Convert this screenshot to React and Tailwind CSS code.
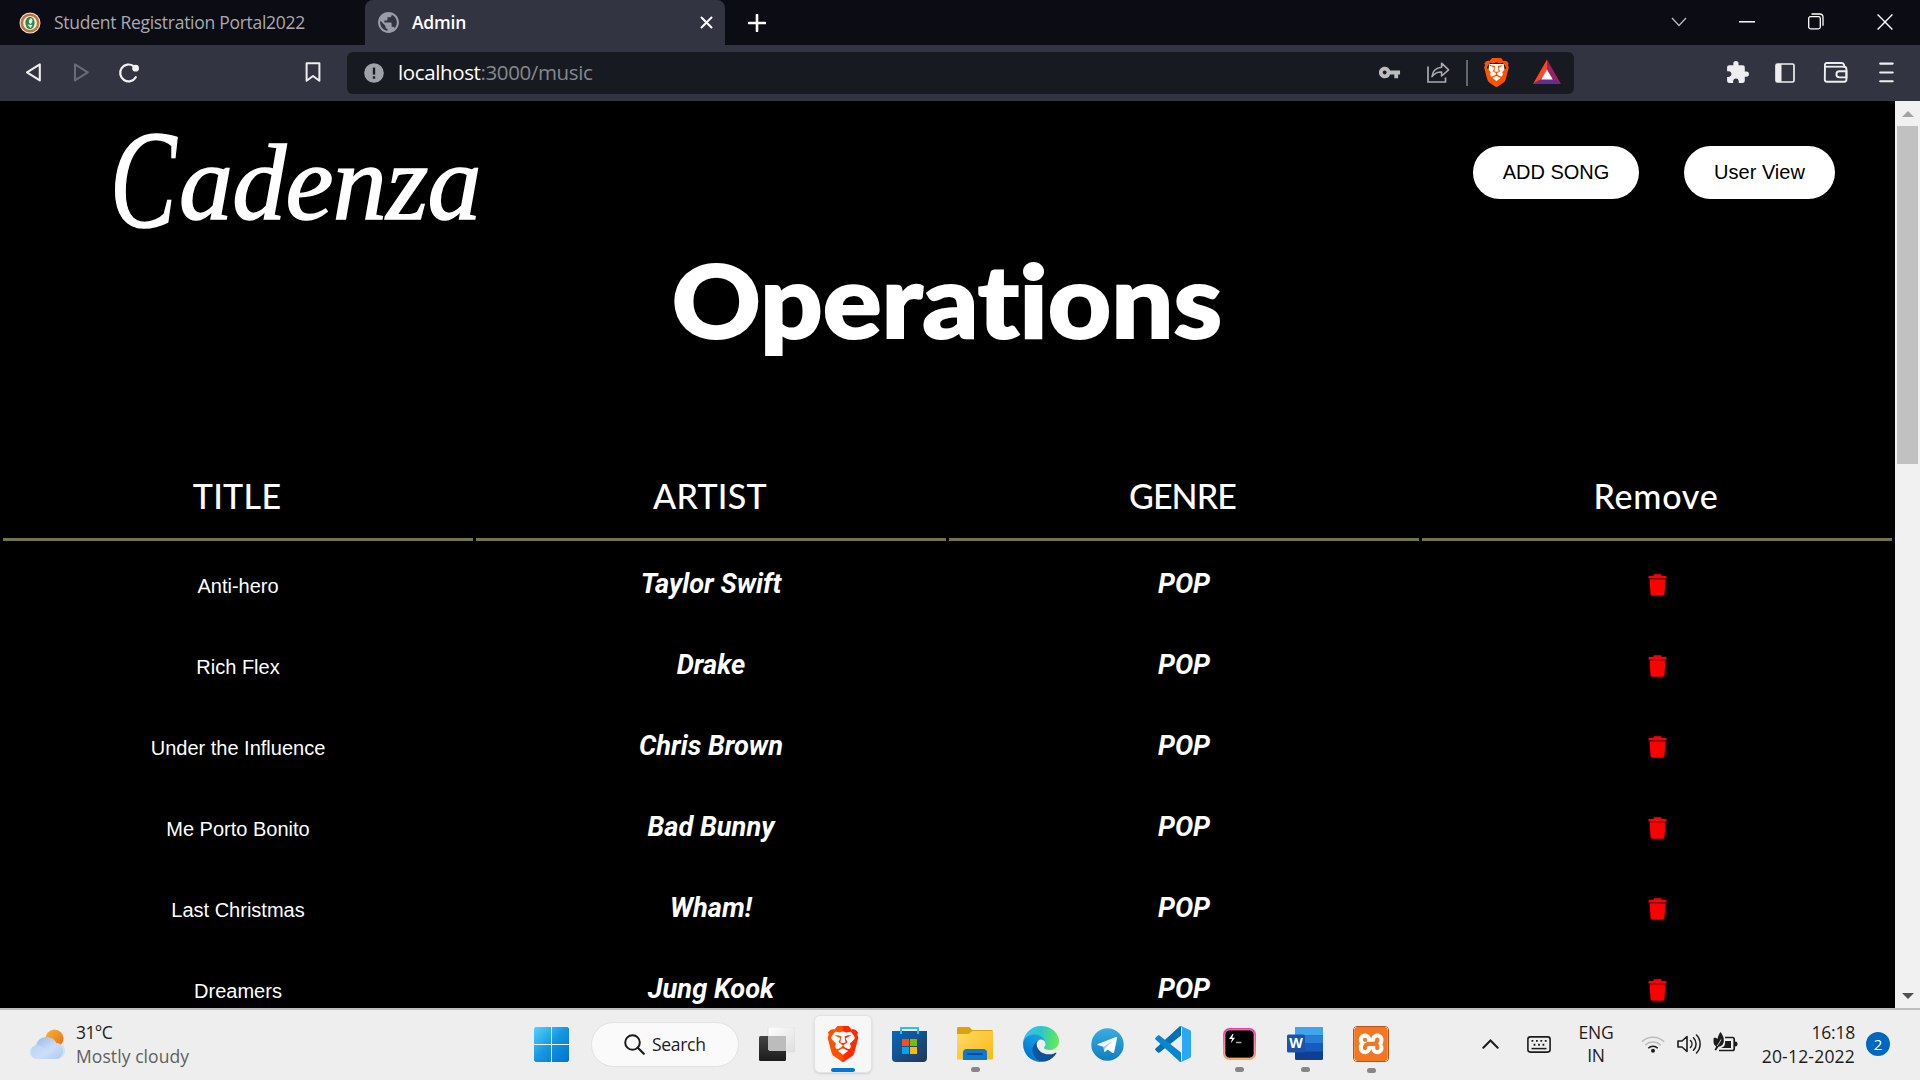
import React from "react";
import { SiBrave, SiXampp } from "react-icons/si";
import { MdExtension, MdVpnKey, MdPublic } from "react-icons/md";

const UI = "font-['Open_Sans','Noto_Sans',sans-serif]";

const songs = [
  ["Anti-hero", "Taylor Swift"],
  ["Rich Flex", "Drake"],
  ["Under the Influence", "Chris Brown"],
  ["Me Porto Bonito", "Bad Bunny"],
  ["Last Christmas", "Wham!"],
  ["Dreamers", "Jung Kook"],
];

const headings = [
  ["TITLE", "pr-[2px] tracking-[0.3px]"],
  ["ARTIST", "pr-[2px] tracking-[0.3px]"],
  ["GENRE", "pr-[3px] tracking-[-0.9px]"],
  ["Remove", "pr-[2px] tracking-[0.8px]"],
];

function Svg({ w, h, className = "", children, vb }) {
  return (
    <svg width={w} height={h} viewBox={vb || `0 0 ${w} ${h}`} fill="none" className={`block shrink-0 ${className}`}>
      {children}
    </svg>
  );
}

function TabStrip() {
  return (
    <div className={`flex h-[45px] items-center bg-[#0c0c14] ${UI}`}>
      <Svg w={22} h={22} className="ml-[19px]">
        <circle cx="11" cy="11" r="10.5" fill="#e9e6df" />
        <circle cx="11" cy="11" r="8.2" stroke="#c4703a" strokeWidth="2.6" fill="#f3efe0" />
        <ellipse cx="11" cy="11" rx="4.6" ry="6.2" fill="#2d8a4a" />
        <path d="M12 6c2.500 1.500 1.500 5-.5 6-2-1-2.500-4 .5-6zM8.500 12.500l5 .5-2 3z" fill="#e8f2e4" />
      </Svg>
      <div className="ml-[13px] w-[311px] whitespace-nowrap text-[17.5px] tracking-[-0.28px] text-[#a9a9b2]">Student Registration Portal2022</div>
      <div className="flex h-[45px] w-[360px] items-center rounded-t-[8px] bg-[#323442]">
        <MdPublic className="ml-[11px] size-[25px] shrink-0 text-[#9a9ca8]" />
        <div className="ml-[11px] w-[288px] text-[17.5px] font-semibold tracking-[-0.2px] text-white">Admin</div>
        <Svg w={13} h={13}>
          <path d="M1.5 1.5l10 10M11.5 1.5l-10 10" stroke="#fff" strokeWidth="2" strokeLinecap="round" />
        </Svg>
      </div>
      <Svg w={18} h={18} className="ml-[23px]">
        <path d="M9 1v16M1 9h16" stroke="#fff" strokeWidth="2.6" strokeLinecap="round" />
      </Svg>
      <Svg w={16} h={10} className="mb-[2px] ml-auto">
        <path d="M1 1l7 7.5L15 1" stroke="#b9b9be" strokeWidth="1.3" />
      </Svg>
      <Svg w={16} h={2} className="mb-[2px] ml-[52px]">
        <path d="M0 .8h16" stroke="#fff" strokeWidth="1.5" />
      </Svg>
      <Svg w={16} h={17} className="mb-[2px] ml-[53px]">
        <rect x=".7" y="3.7" width="11.6" height="12.2" rx="1.8" stroke="#fff" strokeWidth="1.3" />
        <path d="M3.500 1h8.300a3.200 3.200 0 0 1 3.200 3.200v8.600" stroke="#fff" strokeWidth="1.3" />
      </Svg>
      <Svg w={16} h={16} className="mr-[27px] mb-[2px] ml-[53px]">
        <path d="M.6.6l14.8 14.8M15.4.6L.6 15.4" stroke="#fff" strokeWidth="1.4" />
      </Svg>
    </div>
  );
}

function Toolbar() {
  return (
    <div className={`flex h-[56px] items-center bg-[#323442] pb-[1px] ${UI}`}>
      <Svg w={17} h={21} className="ml-[25px]">
        <path d="M14.8 2.4v16L2 10.4z" stroke="#eeeef0" strokeWidth="2.1" strokeLinejoin="round" />
      </Svg>
      <Svg w={17} h={21} className="ml-[31px]">
        <path d="M2 2.4v16l12.8-8z" stroke="#696b77" strokeWidth="2.1" strokeLinejoin="round" />
      </Svg>
      <Svg w={22} h={22} className="ml-[28px]">
        <path d="M17.8 15.2A8.400 8.400 0 1 1 15.6 4.200" stroke="#f2f2f4" strokeWidth="2.2" strokeLinecap="round" />
        <circle cx="17.6" cy="6.2" r="3.4" fill="#f2f2f4" />
      </Svg>
      <Svg w={16} h={21} className="ml-[165px]">
        <path d="M1.6 1.2h12.8v17.6L8 14l-6.4 4.8z" stroke="#eeeef0" strokeWidth="2" strokeLinejoin="round" />
      </Svg>
      <div className="ml-[26px] flex h-[42px] w-[1227px] items-center rounded-[6px] bg-[#181a21]">
        <Svg w={20} h={20} className="ml-[17px]">
          <circle cx="10" cy="10" r="9.8" fill="#9fa1a9" />
          <path d="M10 4.6v7" stroke="#181a21" strokeWidth="2.4" />
          <path d="M10 13.3v2.4" stroke="#181a21" strokeWidth="2.4" />
        </Svg>
        <div className="ml-[14px] w-[980px] whitespace-nowrap text-[20.5px] tracking-[-0.38px] text-[#868890]">
          <span className="text-white">localhost</span>:3000/music
        </div>
        <MdVpnKey className="size-[23px] shrink-0 text-[#bdbdc0]" />
        <Svg w={24} h={23} className="ml-[25px]">
          <path d="M2 5.500V21h17.500v-4.500" stroke="#a9aaae" strokeWidth="1.7" />
          <path d="M6 15.600c.6-6 4.200-9 9.600-9.400V2.200l7 6.600-7 6.200v-4c-4-.2-7 1.200-9.600 4.600z" stroke="#a9aaae" strokeWidth="1.600" strokeLinejoin="round" />
        </Svg>
        <div className="ml-[16px] h-[26px] w-[2px] bg-[#66676d]" />
        <div className="ml-[12px] grid size-[32px] place-items-center">
          <BraveLogo size="size-[29px]" from="#ff5500" to="#ff5000" id="bar" />
        </div>
        <Svg w={28} h={26} className="mb-[2px] ml-[21px]">
          <path d="M14 .5v11L8 20.500 0 25z" fill="#ff4724" />
          <path d="M14 .5L28 25l-8-4.500-6-9z" fill="#9e1f63" />
          <path d="M0 25h28l-8-5H8z" fill="#662d91" />
          <path d="M14 10.500l5.800 10H8.200z" fill="#fff" />
        </Svg>
      </div>
      <MdExtension className="ml-[151px] size-[25px] shrink-0 text-[#eeeef0]" />
      <Svg w={20} h={20} className="ml-[25px]">
        <rect x="1" y="1" width="18" height="18" rx="1.500" stroke="#eeeef0" strokeWidth="1.700" />
        <path d="M1 1h5.500v18H1z" fill="#eeeef0" />
      </Svg>
      <Svg w={25} h={21} className="ml-[28px]">
        <path d="M2 2.500C2 1.600 2.800 1 3.700 1h15.100c1 0 2 .8 2.200 1.800l.4 2c1.300.2 2 1 2 2.200v10.500c0 1.300-.8 2.200-2.200 2.200H4c-1.300 0-2.200-.9-2.200-2.200z" stroke="#eeeef0" strokeWidth="1.900" />
        <path d="M2 4.700h19.500" stroke="#eeeef0" strokeWidth="1.800" />
        <path d="M23.500 9.200h-7a3.100 3.100 0 0 0 0 6.200h7z" stroke="#eeeef0" strokeWidth="1.900" />
      </Svg>
      <Svg w={15} h={21} className="ml-[31px]">
        <path d="M1.200 1.600h12.500M1.200 10.500h12.500M1.200 19.300h12.500" stroke="#eeeef0" strokeWidth="2.100" strokeLinecap="round" />
      </Svg>
    </div>
  );
}

function BraveLogo({ size, from, to, id }) {
  return (
    <div className={`grid ${size}`}>
      <svg viewBox="0 0 24 24" className="col-start-1 row-start-1 size-full">
        <path d="M6 5h12l1 7-3 6-4 3.500L8 18l-3-6z" fill="#fff" />
        <defs>
          <linearGradient id={`brave-${id}`} x1="0" x2="1">
            <stop offset=".45" stopColor={from} />
            <stop offset=".55" stopColor={to} />
          </linearGradient>
        </defs>
      </svg>
      <SiBrave className="col-start-1 row-start-1 size-full" style={{ fill: `url(#brave-${id})`, stroke: "none" }} />
    </div>
  );
}

function Trash() {
  return (
    <Svg w={19} h={22}>
      <path d="M5.500 2V.8c0-.3.3-.6.6-.6h6.800c.3 0 .6.3.6.6V2h4.300c.5 0 .7.2.7.6v1.800H.5V2.600c0-.4.2-.6.700-.6z" fill="#f00" />
      <path d="M1.600 5.200h15.800l-.9 14.600c-.1 1.100-.9 1.900-2 1.900h-10c-1.100 0-1.900-.8-2-1.900z" fill="#f00" />
    </Svg>
  );
}

function Page() {
  return (
    <div className="flex h-[907px]">
      <main className="flex h-full w-[1895px] flex-col overflow-hidden bg-black text-white">
        <header className="flex h-[145px] shrink-0 items-start justify-between pr-[60px] pl-[110px]">
          <div className="flex h-[145px] items-baseline font-['Liberation_Serif',serif] italic [-webkit-text-stroke:1.5px_white]">
            <span className="w-[69px] origin-left scale-x-[0.71] text-[140px] leading-[158px]">C</span>
            <span className="-translate-y-[8px] text-[108px] leading-none tracking-[-0.7px]">adenza</span>
          </div>
          <nav className="mt-[45px] flex gap-[45px] font-['Liberation_Sans',Arial,sans-serif] text-[20px] text-black">
            <button className="h-[53px] w-[166px] rounded-full bg-white pb-[2px]">ADD SONG</button>
            <button className="h-[53px] w-[151px] rounded-full bg-white pb-[2px]">User View</button>
          </nav>
        </header>
        <h1 className="-mt-[7px] flex h-[120px] shrink-0 origin-center scale-x-[1.088] items-center justify-center pr-[1px] font-['Lato',sans-serif] text-[101px] leading-[120px] font-black [font-variant-ligatures:none] [-webkit-text-stroke:2px_white]">Operations</h1>
        <section className="mt-[83px] flex w-full shrink-0 flex-col px-[3px]">
          <div className="grid grid-cols-4 gap-[3px]">
            {headings.map(([h, tr]) => (
              <div key={h} className={`flex h-[99px] items-center justify-center border-b-[3px] border-[#757543] pt-[10px] font-['Lato',sans-serif] text-[34px] font-medium ${tr}`}>
                {h}
              </div>
            ))}
          </div>
          <div className="mt-[3px]">
            {songs.map(([title, artist]) => (
              <div key={title} className="grid h-[81px] grid-cols-4 items-center gap-[3px] text-center">
                <div className="pt-[3px] font-['Liberation_Sans',Arial,sans-serif] text-[20px]">{title}</div>
                <div className="font-['Roboto',sans-serif] text-[27.2px] font-bold italic">{artist}</div>
                <div className="font-['Roboto',sans-serif] text-[27.2px] font-bold italic">POP</div>
                <div className="flex justify-center pt-[1px]"><Trash /></div>
              </div>
            ))}
          </div>
        </section>
      </main>
      <aside className="flex h-full w-[25px] flex-col items-center bg-[#f1f1f1]">
        <Svg w={12} h={6} className="mt-[10px]"><path d="M6 0l6 6H0z" fill="#a3a3a3" /></Svg>
        <div className="mt-[9px] h-[338px] w-[21px] bg-[#c1c1c1]" />
        <Svg w={12} h={6} className="mt-auto mb-[9px]"><path d="M0 0h12L6 6z" fill="#505050" /></Svg>
      </aside>
    </div>
  );
}

function Dot() {
  return <div className="h-[5px] w-[9px] rounded-full bg-[#868686]" />;
}

function TaskButton({ children, running, active }) {
  return (
    <div className={`flex h-[58px] w-[58px] shrink-0 flex-col items-center rounded-[6px] pt-[10px] ${active ? "border border-[#e3e3e3] bg-[#f7f7f7] shadow-sm" : "border border-transparent"}`}>
      <div className="grid h-[36px] w-[36px] place-items-center">{children}</div>
      {active && <div className="mt-[6px] h-[5px] w-[24px] rounded-full bg-[#0078d4]" />}
      {running && <div className="mt-[6px]"><Dot /></div>}
    </div>
  );
}

function StartIcon() {
  return (
    <Svg w={35} h={35}>
      <defs>
        <linearGradient id="win" x1="0" y1="0" x2="35" y2="35" gradientUnits="userSpaceOnUse">
          <stop stopColor="#4fd5ff" /><stop offset=".5" stopColor="#1594e0" /><stop offset="1" stopColor="#0072d0" />
        </linearGradient>
      </defs>
      <path d="M1.500 0H17v17H0V1.500zM18 0h15.500L35 1.500V17H18zM0 18h17v17H1.500L0 33.500zM18 18h17v15.500L33.500 35H18z" fill="url(#win)" />
    </Svg>
  );
}

function TaskViewIcon() {
  return (
    <Svg w={36} h={34}>
      <defs>
        <linearGradient id="tv" x1="0" y1="0" x2="0" y2="1"><stop stopColor="#454545" /><stop offset="1" stopColor="#1b1b1b" /></linearGradient>
        <linearGradient id="tw" x1="0" y1="0" x2="1" y2="1"><stop stopColor="#fff" stopOpacity=".95" /><stop offset="1" stopColor="#ddd" stopOpacity=".9" /></linearGradient>
      </defs>
      <rect x="9" y="0" width="27" height="25" rx="1.500" fill="url(#tw)" stroke="#dcdcdc" strokeWidth=".6" />
      <rect x="0" y="9" width="27" height="25" rx="1.500" fill="url(#tv)" />
      <path d="M9 9h18v15H10.500L9 22.500z" fill="#bcbcbc" />
    </Svg>
  );
}

function StoreIcon() {
  return (
    <Svg w={35} h={35}>
      <defs><linearGradient id="st" x1="0" y1="0" x2="1" y2="1"><stop stopColor="#0669bd" /><stop offset="1" stopColor="#243559" /></linearGradient></defs>
      <path d="M0 4h35v27a4 4 0 0 1-4 4H4a4 4 0 0 1-4-4z" fill="url(#st)" />
      <path d="M9 7V1h17v6" stroke="#2ac1f2" strokeWidth="2" />
      <path d="M10 12h7v7h-7z" fill="#f25022" /><path d="M18 12h7v7h-7z" fill="#7fba00" />
      <path d="M10 20h7v7h-7z" fill="#00a4ef" /><path d="M18 20h7v7h-7z" fill="#ffb900" />
    </Svg>
  );
}

function FolderIcon() {
  return (
    <Svg w={36} h={33}>
      <defs><linearGradient id="fo" x1="0" y1="0" x2="1" y2="1"><stop stopColor="#ffda6b" /><stop offset="1" stopColor="#fbb90f" /></linearGradient></defs>
      <path d="M0 1.500C0 .7.7 0 1.500 0h10.800l3 3H35l1 1v10H0z" fill="#dda109" />
      <path d="M0 7h11.500l3.800-3H36v27.500l-1 1H0z" fill="url(#fo)" />
      <path d="M6 33v-7.500c0-2 1.500-3.500 3.500-3.500h17c2 0 3.500 1.500 3.500 3.500V33z" fill="#0f78cf" />
      <path d="M11 27h14" stroke="#0b4d92" strokeWidth="1.800" strokeLinecap="round" />
    </Svg>
  );
}

function EdgeIcon() {
  return (
    <Svg w={36} h={36} vb="0 0 256 256">
      <defs>
        <linearGradient id="e1" x1="0" y1="0" x2="1" y2="0"><stop stopColor="#0c59a4" /><stop offset="1" stopColor="#114a8b" /></linearGradient>
        <linearGradient id="e2" x1="153" y1="100" x2="46" y2="216" gradientUnits="userSpaceOnUse"><stop stopColor="#1b9de2" /><stop offset=".4" stopColor="#1595df" /><stop offset="1" stopColor="#0078d4" /></linearGradient>
        <linearGradient id="e3" x1="10" y1="60" x2="250" y2="110" gradientUnits="userSpaceOnUse"><stop stopColor="#35c1f1" /><stop offset=".45" stopColor="#2cc6c9" /><stop offset="1" stopColor="#66eb50" /></linearGradient>
      </defs>
      <path d="M231 190.500c-3.400 1.800-6.900 3.400-10.500 4.700a101 101 0 0 1-35.700 6.400c-47 0-88-32.300-88-73.900.1-11.400 6.400-21.800 16.400-27.200-42.600 1.800-53.500 46.100-53.500 72.100 0 73.500 67.800 81 82.400 81 7.900 0 19.700-2.300 26.800-4.600l1.300-.4a128.300 128.300 0 0 0 66.600-52.800 4 4 0 0 0-5.800-5.300z" fill="url(#e1)" />
      <path d="M105.700 241.400a79.200 79.200 0 0 1-22.700-21.300 80.700 80.700 0 0 1 29.500-120c3.200-1.400 8.500-4.100 15.600-4a32.400 32.400 0 0 1 25.700 13 31.900 31.900 0 0 1 6.300 18.700c0-.2 24.500-79.600-80-79.600-43.900 0-80 41.700-80 78.200a130.200 130.200 0 0 0 12.100 56 128 128 0 0 0 156.400 67.100 75.600 75.600 0 0 1-62.800-8z" fill="url(#e2)" />
      <path d="M152.300 148.900c-.9 1-3.400 2.500-3.400 5.600 0 2.600 1.700 5.200 4.800 7.300 14.300 10 41.400 8.600 41.500 8.600a59.600 59.600 0 0 0 30.300-8.300 61.400 61.400 0 0 0 30.400-52.900c.3-22.400-8-37.300-11.300-43.900C223.500 23.900 177.700 0 128 0A128 128 0 0 0 0 126.200c.5-36.500 36.800-66 80-66 3.500 0 23.500.3 42 10.100 16.300 8.600 24.900 18.900 30.800 29.200 6.200 10.700 7.300 24.100 7.300 29.500 0 5.300-2.700 13.300-7.800 19.900z" fill="url(#e3)" />
    </Svg>
  );
}

function TelegramIcon() {
  return (
    <Svg w={33} h={33}>
      <defs><linearGradient id="tg" x1="0" y1="0" x2="0" y2="1"><stop stopColor="#37aee2" /><stop offset="1" stopColor="#0f7fbf" /></linearGradient></defs>
      <circle cx="16.500" cy="16.500" r="16.200" fill="url(#tg)" />
      <path d="M6.500 16.300L25 9c.8-.3 1.300.1 1.100 1.100l-3 14.100c-.2.9-.9 1.100-1.700.7l-4.700-3.500-2.600 2.400c-.5.300-.9.200-1-.5l-.6-4.600-5.700-1.600c-.9-.2-.9-.6-.3-.8z" fill="#fff" />
      <path d="M12.500 18.700l9.600-6.200-7.600 7.600-.5 3.300z" fill="#a9cfe8" />
    </Svg>
  );
}

function CodeIcon() {
  return (
    <Svg w={36} h={36}>
      <path d="M26 0v9.500L4.500 26.500c-.5.400-1.200.4-1.700 0L.5 24.300c-.5-.5-.5-1.200 0-1.700L24 1c.6-.6 1.300-.9 2-1z" fill="#0070b8" />
      <path d="M26 36v-9.500L4.500 9.500c-.5-.4-1.200-.4-1.700 0L.5 11.700c-.5.500-.5 1.200 0 1.700L24 35c.6.600 1.300.9 2 1z" fill="#0a86d0" />
      <path d="M26 0l8.700 4.100c.8.400 1.300 1.200 1.300 2v23.800c0 .8-.5 1.600-1.300 2L26 36c-1 .2-1.600 0-2.400-.8 1.400 1 3.400 0 3.400-1.700v-31c0-1.700-2-2.700-3.400-1.700C24.400 0 25 -.2 26 0z" fill="#2aa8f5" />
    </Svg>
  );
}

function HyperIcon() {
  return (
    <Svg w={33} h={32}>
      <defs><linearGradient id="hy" x1="0" y1="0" x2="0" y2="1"><stop stopColor="#f531b0" /><stop offset=".55" stopColor="#f5738b" /><stop offset="1" stopColor="#ffa838" /></linearGradient></defs>
      <rect width="33" height="32" rx="6.500" fill="url(#hy)" />
      <rect x="2" y="2" width="29" height="28" rx="4.500" fill="#000" stroke="#f7c7d5" strokeWidth=".6" />
      <path d="M9.500 6L6 11h3l-1.200 4.200L12 9.700H9.200L10.500 6z" fill="#fff" />
      <path d="M13 14.500h5.500" stroke="#aaa" strokeWidth="1.500" />
    </Svg>
  );
}

function WordIcon() {
  return (
    <div className="grid h-[33px] w-[36px]">
      <Svg w={36} h={33} className="col-start-1 row-start-1">
        <rect x="8" width="28" height="33" rx="1.500" fill="#103f91" />
        <path d="M8 1.500C8 .6 8.600 0 9.500 0h25c.9 0 1.500.6 1.500 1.500V8.500H8z" fill="#41a5ee" />
        <path d="M8 8.500h28v8H8z" fill="#2b7cd3" /><path d="M8 16.500h28v8H8z" fill="#185abd" />
        <rect y="7.500" width="18" height="18" rx="1.500" fill="#1853ad" />
      </Svg>
      <span className="col-start-1 row-start-1 mt-[7px] w-[18px] text-center text-[14px] leading-[18px] font-bold text-white">W</span>
    </div>
  );
}

function XamppIcon() {
  return (
    <div className="grid size-[36px] place-items-center rounded-[4px] border border-[#b45617] bg-linear-to-b from-[#c9723a] via-[#f37623] to-[#e8701f]">
      <SiXampp className="col-start-1 row-start-1 size-[34px] rounded-[3px] bg-white text-[#f37623]" />
    </div>
  );
}

function Taskbar() {
  return (
    <footer className={`flex h-[72px] items-center border-t-2 border-[#bdbdbd] bg-[#eee] pb-[2px] text-[17.5px] text-[#1c1c1c] ${UI}`}>
      <Svg w={36} h={31} className="ml-[29px]">
        <defs>
          <linearGradient id="sun" x1="0" y1="0" x2="1" y2="1"><stop stopColor="#f5b63a" /><stop offset="1" stopColor="#ee6a10" /></linearGradient>
          <linearGradient id="cl" x1="0" y1="0" x2="1" y2="1"><stop stopColor="#8fb2ee" /><stop offset=".6" stopColor="#cfe0f8" /><stop offset="1" stopColor="#7ea3e6" /></linearGradient>
        </defs>
        <circle cx="25.500" cy="9.500" r="9" fill="url(#sun)" />
        <path d="M8 30a7 7 0 0 1-1-13.800A11 11 0 0 1 27.500 14 8.200 8.200 0 0 1 28 30z" fill="url(#cl)" />
        <path d="M8 30a7 7 0 1 1 3-13.300c3 1 5 3.300 8 3.300 2-5 6-6.500 9.500-6A8 8 0 0 1 28 30z" fill="#c9dcf8" opacity=".65" />
      </Svg>
      <div className="mb-[1px] ml-[11px] w-[458px] leading-[24px]">
        <div className="tracking-[-0.6px]">31°C</div>
        <div className="tracking-[0.08px] text-[#5f5f5f]">Mostly cloudy</div>
      </div>
      <StartIcon />
      <div className="ml-[22px] flex h-[45px] w-[148px] items-center rounded-full border border-[#e2e2e2] bg-[#fafafa]">
        <Svg w={21} h={21} className="ml-[32px]">
          <circle cx="8.500" cy="8.500" r="7.300" stroke="#1b1b1b" strokeWidth="2" />
          <path d="M13.800 13.800l6 6" stroke="#1b1b1b" strokeWidth="2.200" strokeLinecap="round" />
        </Svg>
        <span className="ml-[7px] tracking-[-0.3px]">Search</span>
      </div>
      <div className="ml-[9px] flex gap-[8px]">
        <TaskButton><TaskViewIcon /></TaskButton>
        <TaskButton active><BraveLogo size="size-[36px]" from="#ff5200" to="#ff2a00" id="task" /></TaskButton>
        <TaskButton><StoreIcon /></TaskButton>
        <TaskButton running><FolderIcon /></TaskButton>
        <TaskButton><EdgeIcon /></TaskButton>
        <TaskButton><TelegramIcon /></TaskButton>
        <TaskButton><CodeIcon /></TaskButton>
        <TaskButton running><HyperIcon /></TaskButton>
        <TaskButton running><WordIcon /></TaskButton>
        <TaskButton running><XamppIcon /></TaskButton>
      </div>
      <Svg w={17} h={10} className="ml-[82px]">
        <path d="M1.300 8.700l7.200-7.200 7.200 7.200" stroke="#1c1c1c" strokeWidth="2" strokeLinecap="round" />
      </Svg>
      <Svg w={24} h={17} className="ml-[28px]">
        <rect x=".9" y=".9" width="22.200" height="15.200" rx="2.500" stroke="#1c1c1c" strokeWidth="1.600" />
        <path d="M4.500 4.900h1.800M9 4.900h1.800M13.400 4.900h1.800M17.800 4.900h1.800M6.600 8.700h1.800M11.100 8.700h1.800M15.500 8.700h1.800" stroke="#1c1c1c" strokeWidth="1.900" />
        <path d="M4.500 12.600h15" stroke="#1c1c1c" strokeWidth="1.500" />
      </Svg>
      <div className="ml-[25px] w-[40px] text-center leading-[23px] tracking-[-0.2px]"><div>ENG</div><div>IN</div></div>
      <Svg w={24} h={18} className="ml-[25px]">
        <path d="M.8 6.800a16 16 0 0 1 22.400 0" stroke="#bdbdbd" strokeWidth="1.600" />
        <path d="M4.200 10.300a11 11 0 0 1 15.600 0" stroke="#bdbdbd" strokeWidth="1.600" />
        <path d="M7.300 13.200a6.600 6.600 0 0 1 9.400 0" stroke="#1c1c1c" strokeWidth="1.600" />
        <circle cx="12" cy="15.700" r="2" fill="#1c1c1c" />
      </Svg>
      <Svg w={24} h={20} className="ml-[12px]">
        <path d="M1 7h4l5-4.500v15L5 13H1z" stroke="#1c1c1c" strokeWidth="1.600" strokeLinejoin="round" />
        <path d="M13.500 6.500a5 5 0 0 1 0 7M16.500 3.700a9 9 0 0 1 0 12.600M19.500 1a13 13 0 0 1 0 18" stroke="#1c1c1c" strokeWidth="1.500" strokeLinecap="round" />
      </Svg>
      <Svg w={25} h={21} className="mb-[4px] ml-[12px]">
        <path d="M12 5.500h7.500c1 0 1.700.7 1.700 1.700v9.600c0 1-.7 1.700-1.700 1.700H6" stroke="#1c1c1c" strokeWidth="1.700" />
        <path d="M22 9.500c2 0 2.500 1 2.500 2.500S24 14.500 22 14.500z" fill="#1c1c1c" />
        <path d="M12 9h6v7H8c3-1 4.500-3 4-7z" fill="#1c1c1c" />
        <path d="M7.500 0c2 3 3.700 5 3.300 9.500-.4 3.500-3 5-5.300 5.200L3 18.500l-1.500-.8 1.700-3.200C.5 13 .2 10 .7 6c2-.6 3 .2 3.800 1C5 4 6 2 7.500 0z" fill="#1c1c1c" />
        <path d="M8 7.500c-1 2.500-2.300 4.500-4 6.500" stroke="#eee" strokeWidth=".8" />
      </Svg>
      <div className="mb-[1px] ml-[17px] w-[100px] text-right leading-[24px]"><div className="tracking-[-0.2px]">16:18</div><div className="tracking-[0.2px]">20-12-2022</div></div>
      <div className="ml-[11px] grid size-[24px] place-items-center rounded-full bg-[#0067c0] text-[15px] leading-none text-white">2</div>
    </footer>
  );
}

export default function App() {
  return (
    <div className="h-[1080px] w-[1920px] overflow-hidden bg-black">
      <TabStrip />
      <Toolbar />
      <Page />
      <Taskbar />
    </div>
  );
}
